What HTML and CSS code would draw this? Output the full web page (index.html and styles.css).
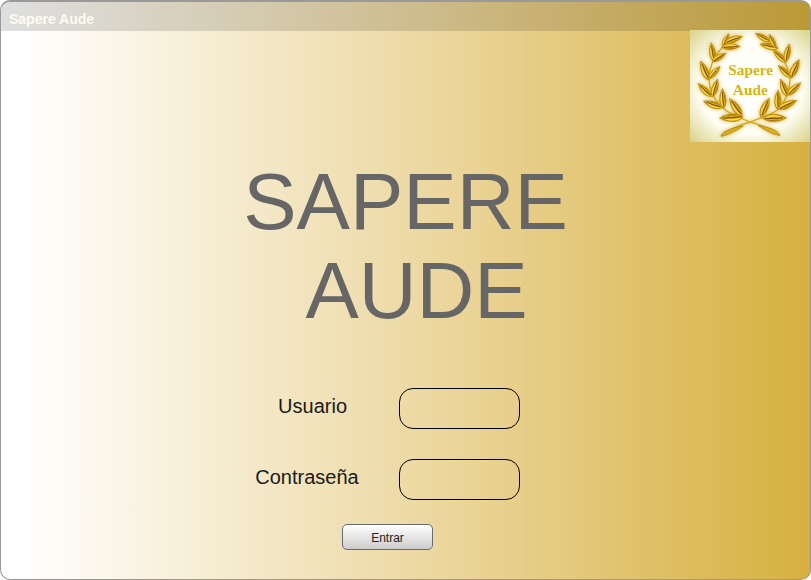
FILE: index.html
```html
<!DOCTYPE html>
<html lang="es">
<head>
<meta charset="utf-8">
<title>Sapere Aude</title>
<link rel="stylesheet" href="styles.css">
</head>
<body>
<div class="window">
  <header class="titlebar">Sapere Aude</header>
  <svg class="logo" viewBox="12 12 363 336" role="img" aria-label="Sapere Aude">
    <defs>
      <radialGradient id="glow" cx="50%" cy="50%" r="68%">
        <stop offset="0" stop-color="#fff"/>
        <stop offset=".62" stop-color="#fffff6"/>
        <stop offset="1" stop-color="#dcd58f"/>
      </radialGradient>
      <filter id="soft" x="-20%" y="-20%" width="140%" height="140%"><feGaussianBlur stdDeviation="6"/></filter>
      <g id="leaf">
        <path d="M0 0C10 -12 32 -13 54 0C34 11 12 10 0 0Z" fill="#e3b916" stroke="#c2900c" stroke-width="3"/>
        <path d="M7 -2C18 -7 30 -7 43 -1" fill="none" stroke="#f7dc55" stroke-width="3"/>
        <path d="M5 1C18 -1 32 0 46 0" fill="none" stroke="#7d4a02" stroke-width="3"/>
        <path d="M14 5C23 6 31 5 37 4" fill="none" stroke="#a06a05" stroke-width="2"/>
      </g>
      <g id="wreath">
        <path d="M109 64C84 90 70 120 69 158C69 190 80 215 107 243C132 267 165 276 193 288C225 296 252 308 281 328M256 62C284 82 301 108 312 150C314 180 302 221 279 248C259 266 221 276 193 288C163 296 133 309 105 331" fill="none" stroke="#d6a714" stroke-width="4"/>
        <path d="M105 331C110 313 145 304 172 300C149 315 127 327 105 331ZM281 328C275 311 242 302 216 298C240 314 259 325 281 328Z" fill="#dcae17" stroke="#a87a09" stroke-width="2"/>
        <use href="#leaf" transform="translate(110 62) rotate(-64) scale(.8)"/>
        <use href="#leaf" transform="translate(118 50) rotate(-20)"/>
        <use href="#leaf" transform="translate(108 64) rotate(-3)"/>
        <use href="#leaf" transform="translate(84 105) rotate(-99)"/>
        <use href="#leaf" transform="translate(79 107) rotate(-32) scale(.9)"/>
        <use href="#leaf" transform="translate(68 161) rotate(-113) scale(1.1)"/>
        <use href="#leaf" transform="translate(70 158) rotate(-49) scale(.9)"/>
        <use href="#leaf" transform="translate(76 211) rotate(-136)"/>
        <use href="#leaf" transform="translate(80 212) rotate(-74)"/>
        <use href="#leaf" transform="translate(107 245) rotate(-160) scale(1.05)"/>
        <use href="#leaf" transform="translate(113 246) rotate(-94) scale(1.05)"/>
        <use href="#leaf" transform="translate(168 269) rotate(-126) scale(1.15)"/>
        <use href="#leaf" transform="translate(170 273) rotate(177) scale(1.25)"/>
        <use href="#leaf" transform="translate(252 46) rotate(-151) scale(.9)"/>
        <use href="#leaf" transform="translate(276 66) rotate(-168)"/>
        <use href="#leaf" transform="translate(269 64) rotate(-116) scale(.8)"/>
        <use href="#leaf" transform="translate(300 108) rotate(-137) scale(.95)"/>
        <use href="#leaf" transform="translate(299 108) rotate(-78)"/>
        <use href="#leaf" transform="translate(315 154) rotate(-137) scale(.95)"/>
        <use href="#leaf" transform="translate(314 156) rotate(-65) scale(1.1)"/>
        <use href="#leaf" transform="translate(304 210) rotate(-112)"/>
        <use href="#leaf" transform="translate(304 208) rotate(-43)"/>
        <use href="#leaf" transform="translate(276 250) rotate(-90) scale(1.05)"/>
        <use href="#leaf" transform="translate(277 249) rotate(-25) scale(1.1)"/>
        <use href="#leaf" transform="translate(225 272) rotate(-66) scale(1.1)"/>
        <use href="#leaf" transform="translate(232 277) rotate(-1) scale(1.25)"/>
      </g>
    </defs>
    <rect x="12" y="12" width="363" height="336" fill="url(#glow)"/>
    <use href="#wreath" filter="url(#soft)" opacity=".8"/>
    <use href="#wreath"/>
    <g class="logo-text">
      <text x="194" y="147">Sapere</text>
      <text x="193" y="207">Aude</text>
    </g>
  </svg>
  <main class="content">
    <h1 class="heading">SAPERE<br>&nbsp;AUDE</h1>
    <form class="login">
      <label class="label" for="user">&nbsp;&nbsp;Usuario</label>
      <input class="field" id="user" type="text">
      <label class="label" for="pass">Contraseña</label>
      <input class="field" id="pass" type="password">
      <button class="submit" type="button">Entrar</button>
    </form>
  </main>
</div>
</body>
</html>
```
FILE: styles.css
```css
* {
  box-sizing: border-box;
}

body {
  margin: 0;
  background: #fff;
  font-family: "Liberation Sans", Arial, sans-serif;
}

.window {
  position: relative;
  min-height: 100vh;
  border: 1px solid #999;
  border-top-width: 2px;
  border-radius: 10px;
  overflow: hidden;
  background: linear-gradient(90deg, #fff 2%, #eddaa6 50%, #d7b03f 100%);
}

.titlebar {
  height: 29px;
  padding: 0 8px;
  background: rgba(0, 0, 0, 0.13);
  color: #fffbee;
  font-size: 14px;
  font-weight: 700;
  line-height: 34px;
}

.logo {
  position: absolute;
  top: 28px;
  right: -1px;
  width: 121px;
  height: 112px;
}

.logo-text {
  fill: #dcb50c;
  font: bold 46px "Liberation Serif", serif;
  text-anchor: middle;
}

.content {
  display: flex;
  flex-direction: column;
  align-items: center;
  padding: 126px 0 24px;
}

.heading {
  margin: 0;
  color: #666;
  font-size: 80px;
  font-weight: 400;
  line-height: 89px;
  text-align: center;
}

.login {
  display: grid;
  grid-template-columns: 104px 121px;
  column-gap: 40px;
  row-gap: 30px;
  margin-top: 53px;
  margin-right: 36px;
}

.label {
  color: #1a1a1a;
  font-size: 20px;
  line-height: 36px;
  text-align: center;
}

.field {
  width: 100%;
  height: 41px;
  padding: 0 12px;
  border: 1px solid #000;
  border-radius: 14px;
  background: transparent;
  font: inherit;
}

.submit {
  grid-column: 1 / -1;
  justify-self: center;
  width: 91px;
  height: 26px;
  margin-top: -6px;
  padding: 0;
  border: 1px solid #666b73;
  border-radius: 5px;
  background: linear-gradient(#fff, #ccc);
  color: #222;
  font: 12px/26px "Liberation Sans", Arial, sans-serif;
}
```
